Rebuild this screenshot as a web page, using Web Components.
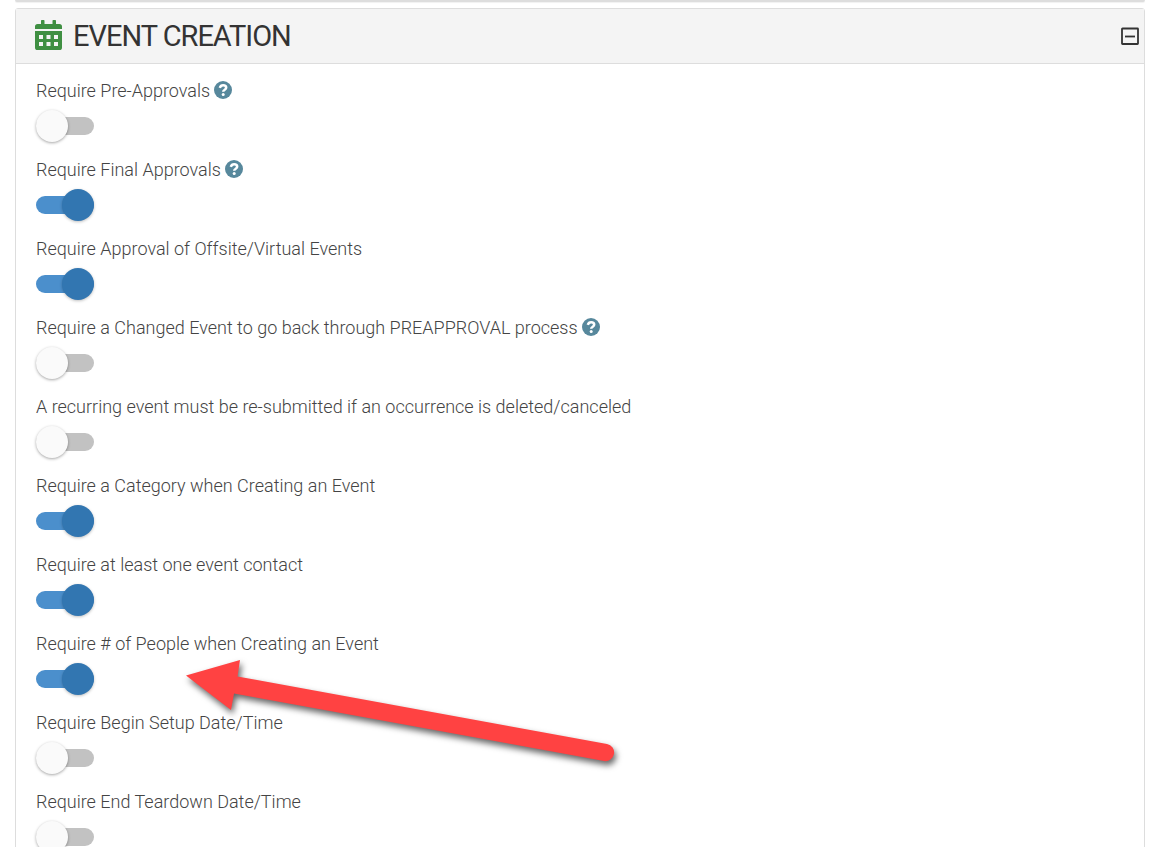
<!DOCTYPE html>
<html lang="en">
<head>
<meta charset="utf-8">
<meta name="viewport" content="width=device-width, initial-scale=1">
<title>Event Creation</title>
<style>
  body { margin: 0; background: #fff; font-family: Roboto, "Liberation Sans", sans-serif; color: #444; }
</style>
</head>
<body>
<settings-page>
  <settings-panel heading="EVENT CREATION">
    <toggle-setting help>Require Pre-Approvals</toggle-setting>
    <toggle-setting help checked>Require Final Approvals</toggle-setting>
    <toggle-setting checked>Require Approval of Offsite/Virtual Events</toggle-setting>
    <toggle-setting help>Require a Changed Event to go back through PREAPPROVAL process</toggle-setting>
    <toggle-setting>A recurring event must be re-submitted if an occurrence is deleted/canceled</toggle-setting>
    <toggle-setting checked>Require a Category when Creating an Event</toggle-setting>
    <toggle-setting checked>Require at least one event contact</toggle-setting>
    <toggle-setting checked>Require # of People when Creating an Event</toggle-setting>
    <toggle-setting>Require Begin Setup Date/Time</toggle-setting>
    <toggle-setting>Require End Teardown Date/Time</toggle-setting>
  </settings-panel>
  <callout-arrow slot="overlay"></callout-arrow>
</settings-page>

<script>
class ShadowElement extends HTMLElement {
  constructor() {
    super();
    this.attachShadow({ mode: "open" }).innerHTML = this.constructor.markup;
  }
}

class SettingsPage extends ShadowElement {
  static markup = `
    <style>
      :host { display: block; position: relative; box-sizing: border-box; height: 100vh; overflow: hidden; padding: 0 16px 0 15px; }
      .previous { height: 2px; margin-bottom: 6px; background: #ddd; border-radius: 0 0 3px 3px; box-shadow: 0 1px 1px rgba(0,0,0,.06); }
    </style>
    <div class="previous"></div>
    <main><slot></slot></main>
    <slot name="overlay"></slot>`;
}

class CalendarIcon extends ShadowElement {
  static markup = `
    <style>:host { display: block; } svg { display: block; }</style>
    <svg width="27" height="30" viewBox="0 0 27 30" fill="#3f8f42" aria-hidden="true">
      <path d="M0 9V6.600a2.600 2.600 0 0 1 2.600-2.600H6V.8Q6 0 6.800 0H8.700Q9.500 0 9.500.8V4H17.500V.8Q17.500 0 18.300 0H20.200Q21 0 21 .8V4h3.400A2.600 2.600 0 0 1 27 6.600V9Z"/>
      <path fill-rule="evenodd" d="M0 11H27V27.400A2.600 2.600 0 0 1 24.400 30H2.600A2.600 2.600 0 0 1 0 27.400ZM4 15v4h4v-4ZM11.500 15v4h4v-4ZM19 15v4h4v-4ZM4 22v4h4v-4ZM11.500 22v4h4v-4ZM19 22v4h4v-4Z"/>
    </svg>`;
}

class SettingsPanel extends ShadowElement {
  static markup = `
    <style>
      :host { display: block; border: 1px solid #ddd; border-radius: 3px; background: #fff; }
      header { display: flex; align-items: center; gap: 11px; height: 54px; padding: 0 4px 0 19px; background: #f4f4f4; border-bottom: 1px solid #ddd; }
      calendar-icon { padding-bottom: 2px; }
      h1 { flex: 1; margin: 0; color: #333; font-size: 29px; line-height: 36px; font-weight: 400; letter-spacing: -1px; }
      button { display: block; padding: 0; border: 0; background: none; cursor: pointer; }
      svg { display: block; }
      .body { display: grid; gap: 16px; padding: 15px 20px; }
    </style>
    <header>
      <calendar-icon></calendar-icon>
      <h1></h1>
      <button type="button" aria-label="Collapse section">
        <svg width="20" height="20" viewBox="0 0 20 20" fill="none" stroke="#333" stroke-width="1.800"><rect x="2" y="2.500" width="16" height="15.500" rx="0.500"/><path d="M5 10.500H15"/></svg>
      </button>
    </header>
    <div class="body"><slot></slot></div>`;
  connectedCallback() {
    this.shadowRoot.querySelector("h1").textContent = this.getAttribute("heading");
  }
}

class HelpButton extends ShadowElement {
  static markup = `
    <style>
      :host { display: block; }
      button { display: block; padding: 0 0 2px; border: 0; background: none; cursor: help; }
      svg { display: block; }
    </style>
    <button type="button" aria-label="Help">
      <svg width="18" height="18" viewBox="0 0 18 18"><circle cx="9" cy="9" r="9" fill="#57889c"/><path d="M5.800 6.800C6.300 5.200 7.300 4.300 9.100 4.300C10.900 4.300 12.200 5.300 12.200 6.800C12.200 8.800 9.200 8.600 9.200 10.800" fill="none" stroke="#fff" stroke-width="2.500"/><circle cx="9.200" cy="13.500" r="1.500" fill="#fff"/></svg>
    </button>`;
}

class ToggleSetting extends ShadowElement {
  static markup = `
    <style>
      :host { display: block; }
      .caption { display: flex; align-items: center; gap: 4px; height: 24px; margin-bottom: 7px; }
      label { font-size: 18px; line-height: 24px; font-weight: 300; }
      input { appearance: none; display: flex; align-items: center; position: relative; width: 58px; height: 32px; margin: 0; cursor: pointer; }
      input::before { content: ""; width: 100%; height: 18px; border-radius: 9px; background: #c2c2c2; }
      input::after { content: ""; position: absolute; left: 0; top: 0; width: 32px; height: 32px; border-radius: 50%; background: #fafafa; box-shadow: 0 1px 3px rgba(0,0,0,.35); }
      input:checked::before { background: #4b8fcc; }
      input:checked::after { left: auto; right: 0; background: #3276b1; box-shadow: 0 1px 3px rgba(0,0,0,.25); }
    </style>
    <div class="caption"><label for="toggle"><slot></slot></label></div>
    <input type="checkbox" id="toggle" role="switch">`;
  connectedCallback() {
    this.shadowRoot.querySelector("input").checked = this.hasAttribute("checked");
    if (this.hasAttribute("help")) {
      this.shadowRoot.querySelector(".caption").append(document.createElement("help-button"));
    }
  }
}

class CalloutArrow extends ShadowElement {
  static markup = `
    <style>
      :host { display: block; position: absolute; left: 176px; top: 650px; pointer-events: none; }
      svg { display: block; overflow: visible; filter: drop-shadow(2px 4px 3px rgba(0,0,0,.6)); }
    </style>
    <svg width="450" height="130" viewBox="0 0 450 130" fill="#ff4242" aria-hidden="true">
      <path d="M10 25.500L64 10L61.500 26.500L431 94A8.600 8.600 0 0 1 428 111L58 43.500L55 60Z"/>
    </svg>`;
}

customElements.define("help-button", HelpButton);
customElements.define("calendar-icon", CalendarIcon);
customElements.define("toggle-setting", ToggleSetting);
customElements.define("settings-panel", SettingsPanel);
customElements.define("callout-arrow", CalloutArrow);
customElements.define("settings-page", SettingsPage);
</script>
</body>
</html>
